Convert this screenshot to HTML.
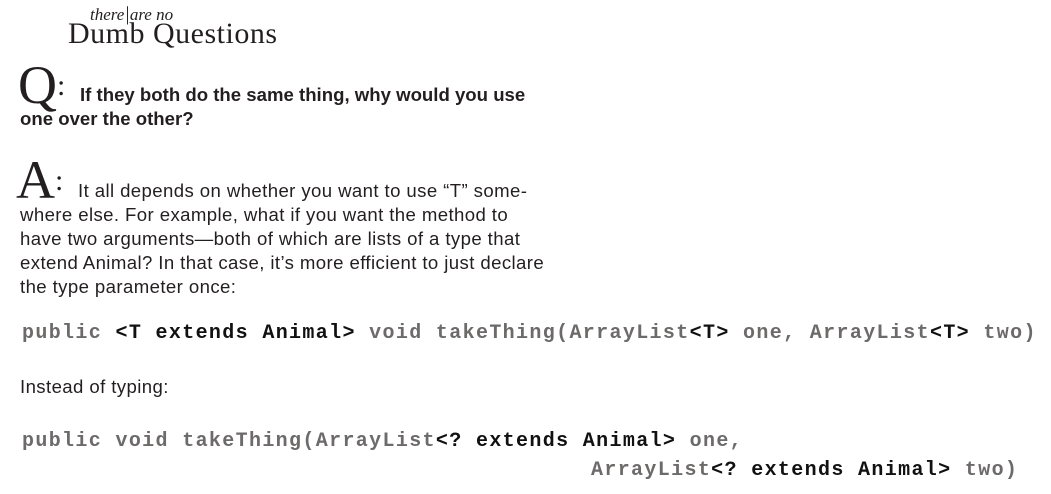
<!DOCTYPE html>
<html><head><meta charset="utf-8"><style>
body{margin:0;width:1051px;height:494px;background:#fff;position:relative;overflow:hidden;font-family:"Liberation Sans",sans-serif;color:#231f20}
.a{position:absolute;white-space:nowrap}
.t{font-size:18.6px;line-height:24px;letter-spacing:0.4px}
.q{letter-spacing:0}
.c{font-family:"Liberation Mono",monospace;font-size:20px;letter-spacing:1.35px;color:#6d6a6a;font-weight:bold}
.c b{color:#111}
.big{font-family:"Liberation Serif",serif;font-size:54px;line-height:54px}
</style></head><body>
<div class="a" style="left:90px;top:3px;font-family:'Liberation Serif',serif;font-size:17px;font-style:italic">there<span style="font-size:20px">|</span>are no</div>
<div class="a" style="left:68px;top:17px;font-family:'Liberation Serif',serif;font-size:30px;letter-spacing:0.5px">Dumb Questions</div>
<div class="a big" style="left:18px;top:58px">Q<span style="font-size:30px;vertical-align:8px">:</span></div>
<div class="a t q" style="left:80px;top:83px;font-weight:bold">If they both do the same thing, why would you use</div>
<div class="a t q" style="left:20px;top:107px;font-weight:bold">one over the other?</div>
<div class="a big" style="left:16px;top:153px">A<span style="font-size:30px;vertical-align:8px">:</span></div>
<div class="a t" style="left:78px;top:179px">It all depends on whether you want to use “T” some-</div>
<div class="a t" style="left:20px;top:203px">where else. For example, what if you want the method to<br>have two arguments—both of which are lists of a type that<br>extend Animal? In that case, it’s more efficient to just declare<br>the type parameter once:</div>
<div class="a c" style="left:22px;top:322px">public <b>&lt;T extends Animal&gt;</b> void takeThing(ArrayList<b>&lt;T&gt;</b> one, ArrayList<b>&lt;T&gt;</b> two)</div>
<div class="a t" style="left:20px;top:375px">Instead of typing:</div>
<div class="a c" style="left:22px;top:430px">public void takeThing(ArrayList<b>&lt;? extends Animal&gt;</b> one,</div>
<div class="a c" style="left:591px;top:459px">ArrayList<b>&lt;? extends Animal&gt;</b> two)</div>
</body></html>
